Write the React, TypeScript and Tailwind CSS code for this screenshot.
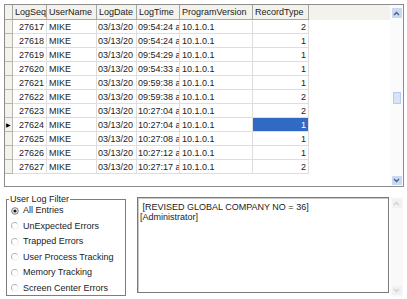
const rows: [number, string, number][] = [
  [27617, "09:54:24 am", 2],
  [27618, "09:54:24 am", 1],
  [27619, "09:54:29 am", 1],
  [27620, "09:54:33 am", 1],
  [27621, "09:59:38 am", 1],
  [27622, "09:59:38 am", 2],
  [27623, "10:27:04 am", 2],
  [27624, "10:27:04 am", 1],
  [27625, "10:27:08 am", 1],
  [27626, "10:27:12 am", 1],
  [27627, "10:27:17 am", 2],
];

const filters = [
  "All Entries",
  "UnExpected Errors",
  "Trapped Errors",
  "User Process Tracking",
  "Memory Tracking",
  "Screen Center Errors",
];

function Chevron({ up, color }: { up?: boolean; color: string }) {
  return (
    <svg width="7" height="5" viewBox="0 0 7 5">
      <polyline
        points={up ? "1,4 3.5,1.5 6,4" : "1,1 3.5,3.5 6,1"}
        fill="none"
        stroke={color}
        strokeWidth="1.4"
      />
    </svg>
  );
}

function Radio({ checked }: { checked?: boolean }) {
  return (
    <svg width="8" height="8" viewBox="0 0 8 8">
      {checked ? (
        <>
          <circle cx="4" cy="4" r="3.3" fill="#f4f4f4" stroke="#6d6d6d" strokeWidth="0.9" />
          <circle cx="4" cy="4" r="1.6" fill="#1a1a1a" />
        </>
      ) : (
        <>
          <circle cx="4" cy="4" r="3.3" fill="#ffffff" stroke="#ececec" strokeWidth="0.9" />
          <path d="M6.3 1.7 A3.3 3.3 0 1 0 1.7 6.3" fill="none" stroke="#a8a8a8" strokeWidth="0.9" />
        </>
      )}
    </svg>
  );
}

const cell = "h-[14px] leading-[14px] overflow-hidden whitespace-nowrap border-r border-b border-[#dedede]";

export default function App() {
  return (
    <div className="w-[407px] h-[299px] bg-white text-[#222] pl-[4px] pt-[4px]" style={{ fontFamily: '"Liberation Sans", Arial, sans-serif' }}>
      {/* grid */}
      <div className="w-[400px] h-[183px] border border-[#8c8c8c] flex">
        <div className="flex-1 text-[9px]">
          <div className="flex bg-[#f3f2ec]">
            <div className="w-[8px] h-[15px] border-r border-b border-[#a9a8a2]" />
            {[
              ["LogSeq", "w-[34px]"],
              ["UserName", "w-[50px]"],
              ["LogDate", "w-[40px]"],
              ["LogTime", "w-[43px]"],
              ["ProgramVersion", "w-[73px]"],
              ["RecordType", "w-[56px]"],
            ].map(([t, w]) => (
              <div key={t} className={`${w} h-[15px] leading-[15px] pl-[2px] overflow-hidden whitespace-nowrap border-r border-b border-[#a9a8a2]`}>
                {t}
              </div>
            ))}
          </div>
          {rows.map(([seq, time, type]) => {
            const sel = seq === 27624;
            return (
              <div key={seq} className="flex">
                <div className="w-[8px] h-[14px] bg-[#f3f2ec] border-r border-b border-[#b9b8b0] flex items-center justify-center">
                  {sel && <span className="text-[6px] leading-none text-black">▶</span>}
                </div>
                <div className={`${cell} w-[34px] text-right pr-[2px]`}>{seq}</div>
                <div className={`${cell} w-[50px] pl-[2px]`}>MIKE</div>
                <div className={`${cell} w-[40px] pl-[1px]`}>03/13/20</div>
                <div className={`${cell} w-[43px] pl-[1px]`}>{time}</div>
                <div className={`${cell} w-[73px] pl-[2px]`}>10.1.0.1</div>
                <div className={`${cell} w-[56px] text-right pr-[2px] ${sel ? "bg-[#316ac5] text-white" : ""}`}>{type}</div>
              </div>
            );
          })}
        </div>
        <div className="w-[13px] bg-[#fbfbfb] flex flex-col items-center pt-[3px] pb-[1px]">
          <div className="w-[10px] h-[10px] bg-[#c9d9f4] flex items-center justify-center">
            <Chevron up color="#4a5f86" />
          </div>
          <div className="w-[8px] h-[12px] mt-[74px] bg-[#d6e3f8] border border-[#b8cbec]" />
          <div className="flex-1" />
          <div className="w-[10px] h-[9px] bg-[#c9d9f4] flex items-center justify-center">
            <Chevron color="#4a5f86" />
          </div>
        </div>
      </div>

      {/* bottom */}
      <div className="flex items-start pt-[10px]">
        <fieldset className="ml-[2px] -mt-[3px] w-[120px] h-[102px] border border-[#7d7d7d] text-[9px]">
          <legend className="ml-[2px] px-[1px] leading-[10px]">User Log Filter</legend>
          <div className="flex flex-col -mt-[1px]">
            {filters.map((f, i) => (
              <div key={f} className="h-[15.5px] flex items-center pl-[4px] gap-[4px]">
                <Radio checked={i === 0} />
                <span className="leading-none">{f}</span>
              </div>
            ))}
          </div>
        </fieldset>
        <div className="ml-[11px] w-[252px] h-[96px] border border-[#7a7a7a] shadow-[inset_1px_1px_0_#c8c8c8] text-[9px] leading-[10px] pt-[4px] pl-[2px] whitespace-pre">
          <div> [REVISED GLOBAL COMPANY NO = 36]</div>
          <div>[Administrator]</div>
        </div>
        <div className="ml-[1px] w-[13px] h-[100px] bg-[#f9f9f9] flex flex-col items-center justify-between py-[2px]">
          <div className="w-[10px] h-[9px] bg-[#f1f1f1] flex items-center justify-center">
            <Chevron up color="#d2d2d2" />
          </div>
          <div className="w-[10px] h-[9px] bg-[#f1f1f1] flex items-center justify-center">
            <Chevron color="#d2d2d2" />
          </div>
        </div>
      </div>
    </div>
  );
}
